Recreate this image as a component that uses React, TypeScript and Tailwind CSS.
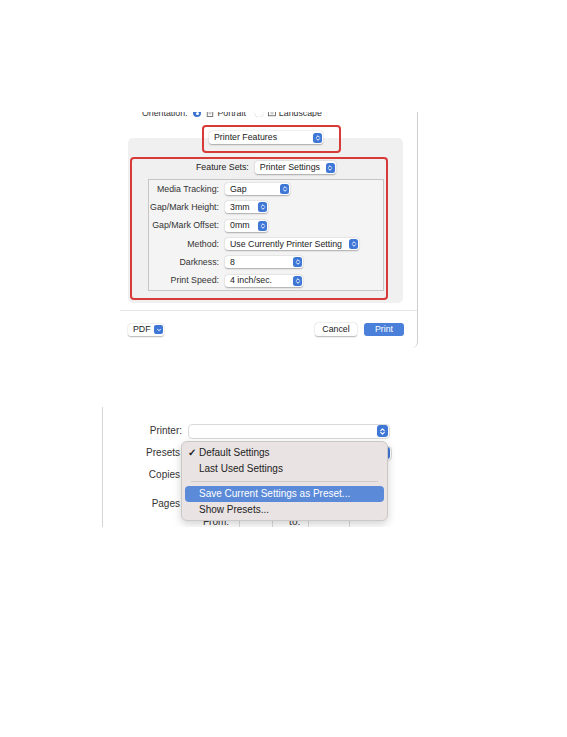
import React from 'react';

const RED = 'border-[#d83a3a]';

function Stepper({ size = 'small' }: { size?: 'small' | 'large' }) {
  const box = size === 'small' ? 'w-[9px] h-[10px] rounded-[2.5px]' : 'w-[11px] h-[12px] rounded-[3px]';
  return (
    <span className={`flex items-center justify-center bg-[#3f77d6] ${box}`}>
      <svg viewBox="0 0 8 10" className={size === 'small' ? 'w-[6px] h-[8px]' : 'w-[7px] h-[9px]'}>
        <path d="M2 4 L4 2 L6 4 M2 6 L4 8 L6 6" stroke="white" strokeWidth="1.3" fill="none" strokeLinecap="round" strokeLinejoin="round" />
      </svg>
    </span>
  );
}

function Popup({ value, width, height = 'h-[12px]' }: { value: string; width: string; height?: string }) {
  return (
    <div className={`flex items-center justify-between bg-white rounded-[3px] pl-[5px] pr-[1px] shadow-[0_0.5px_1.5px_rgba(0,0,0,0.3)] ${width} ${height}`}>
      <span>{value}</span>
      <Stepper />
    </div>
  );
}

const settings = [
  { label: 'Media Tracking:', value: 'Gap', width: 'w-[65px]' },
  { label: 'Gap/Mark Height:', value: '3mm', width: 'w-[43px]' },
  { label: 'Gap/Mark Offset:', value: '0mm', width: 'w-[43px]' },
  { label: 'Method:', value: 'Use Currently Printer Setting', width: 'w-[134px]' },
  { label: 'Darkness:', value: '8', width: 'w-[78px]' },
  { label: 'Print Speed:', value: '4 inch/sec.', width: 'w-[78px]' },
];

function PaperIcon({ landscape }: { landscape?: boolean }) {
  return (
    <svg viewBox="0 0 10 10" className="w-[8px] h-[8px] ml-[5px] mr-[3px]">
      {landscape ? (
        <rect x="0.5" y="2" width="9" height="6.5" fill="none" stroke="#444" strokeWidth="0.9" />
      ) : (
        <rect x="1.5" y="0.5" width="7" height="9" fill="none" stroke="#444" strokeWidth="0.9" />
      )}
      <path d="M3 4 H7 M3 6 H7" stroke="#666" strokeWidth="0.6" />
    </svg>
  );
}

function PrintDialogFeatures() {
  return (
    <div className="ml-[120px] mt-[112px] w-[298px] flex flex-col border-r border-[#cfcfcf] rounded-br-[6px] pb-[12px] text-[8.8px] leading-none text-[#222]">
      {/* orientation row, cropped at the top of the screenshot */}
      <div className="h-[5px] overflow-hidden">
        <div className="-mt-[6px] h-[14px] flex items-center pl-[22px] text-[#333]">
          <span>Orientation:</span>
          <span className="ml-[6px] w-[8px] h-[8px] rounded-full bg-[#3d74d0] flex items-center justify-center">
            <span className="w-[3px] h-[3px] rounded-full bg-white" />
          </span>
          <PaperIcon />
          <span>Portrait</span>
          <span className="ml-[9px] w-[8px] h-[8px] rounded-full bg-white shadow-[0_0_1px_rgba(0,0,0,0.4)]" />
          <PaperIcon landscape />
          <span>Landscape</span>
        </div>
      </div>

      <div className={`relative z-10 mt-[8px] ml-[82px] w-[139px] h-[28px] border-2 ${RED} rounded-[4px] pt-[4px] pl-[5px]`}>
        <Popup value="Printer Features" width="w-[114px]" height="h-[13px]" />
      </div>

      <div className="-mt-[15px] ml-[8px] w-[275px] bg-[#f0f0f0] rounded-[5px] pt-[19px] pl-[2px] pb-[3px]">
        <div className={`w-[258px] h-[143px] border-2 ${RED} rounded-[4px] flex flex-col`}>
          <div className="mt-[2px] h-[13px] flex items-center pl-[64px]">
            <span>Feature Sets:</span>
            <div className="ml-[6px]">
              <Popup value="Printer Settings" width="w-[81px]" height="h-[13px]" />
            </div>
          </div>
          <div className="mt-[5px] ml-[16px] w-[236px] h-[112px] border border-[#c6c6c6] bg-[#f4f4f4] flex flex-col">
            {settings.map((s) => (
              <div key={s.label} className="h-[18.4px] flex items-center">
                <span className="w-[70px] text-right text-[#333]">{s.label}</span>
                <div className="ml-[6px]">
                  <Popup value={s.value} width={s.width} />
                </div>
              </div>
            ))}
          </div>
        </div>
      </div>

      <div className="mt-[7px] h-px bg-[#e6e6e6]" />

      <div className="mt-[12px] h-[13px] flex items-center pl-[8px] pr-[13px]">
        <div className="w-[36px] h-[12px] flex items-center justify-between bg-white rounded-[3px] pl-[5px] pr-[1px] shadow-[0_0.5px_1.5px_rgba(0,0,0,0.3)]">
          <span>PDF</span>
          <span className="w-[9px] h-[9px] rounded-[2px] bg-[#3f77d6] flex items-center justify-center">
            <svg viewBox="0 0 8 8" className="w-[6px] h-[6px]">
              <path d="M2 3 L4 5 L6 3" stroke="white" strokeWidth="1.3" fill="none" strokeLinecap="round" strokeLinejoin="round" />
            </svg>
          </span>
        </div>
        <div className="flex-1" />
        <div className="w-[42px] h-[13px] flex items-center justify-center bg-white rounded-[3px] shadow-[0_0.5px_1.5px_rgba(0,0,0,0.3)]">
          Cancel
        </div>
        <div className="ml-[7px] w-[40px] h-[13px] flex items-center justify-center bg-[#4a80d9] text-white rounded-[3px]">
          Print
        </div>
      </div>
    </div>
  );
}

function PresetsMenu() {
  return (
    <div className="absolute left-[78px] top-[34px] w-[207px] h-[80px] rounded-[6px] bg-[#e9e3e3] border border-[#cdc8c8] shadow-[0_3px_8px_rgba(0,0,0,0.18)] pt-[3px] px-[3px] text-[10px] leading-none text-[#222]">
      <div className="h-[16px] flex items-center">
        <span className="w-[14px] pl-[3px] text-[10px] font-bold">✓</span>
        <span>Default Settings</span>
      </div>
      <div className="h-[16px] flex items-center pl-[14px]">Last Used Settings</div>
      <div className="h-[9px] pt-[4px] px-[6px]">
        <div className="h-px bg-[#cfc9c9]" />
      </div>
      <div className="h-[16px] flex items-center pl-[14px] bg-[#5b8ad8] text-white rounded-[4px]">
        Save Current Settings as Preset...
      </div>
      <div className="h-[16px] flex items-center pl-[14px]">Show Presets...</div>
    </div>
  );
}

function PrintDialogPresets() {
  return (
    <div className="relative ml-[102px] mt-[59px] w-[300px] h-[120px] border-l border-[#d6d6d6] overflow-hidden text-[10px] leading-none text-[#333]">
      <div className="mt-[16px] h-[16px] flex items-center">
        <span className="w-[79px] text-right">Printer:</span>
        <div className="ml-[6px] w-[202px] h-[15px] flex items-center justify-end pr-[1px] bg-white border border-[#dadada] rounded-[4px]">
          <Stepper size="large" />
        </div>
      </div>
      <div className="mt-[6px] h-[16px] flex items-center">
        <span className="w-[77px] text-right">Presets</span>
        <div className="ml-[8px] w-[204px] h-[15px] flex items-center justify-end pr-[1px] bg-white border border-[#dadada] rounded-[4px]">
          <Stepper size="large" />
        </div>
      </div>
      <div className="mt-[6px] h-[16px] flex items-center">
        <span className="w-[77px] text-right">Copies</span>
      </div>
      <div className="mt-[13px] h-[16px] flex items-center">
        <span className="w-[77px] text-right">Pages</span>
      </div>
      <div className="mt-[2px] h-[16px] flex items-center pl-[100px]">
        <span>From:</span>
        <span className="ml-[10px] w-[34px] h-[13px] bg-white border border-[#dadada]" />
        <span className="ml-[16px]">to:</span>
        <span className="ml-[8px] w-[42px] h-[13px] bg-white border border-[#dadada]" />
      </div>
      <PresetsMenu />
    </div>
  );
}

export default function App() {
  return (
    <div className="w-[567px] h-[737px] bg-white overflow-hidden flex flex-col font-['Liberation_Sans',Arial,sans-serif]">
      <PrintDialogFeatures />
      <PrintDialogPresets />
    </div>
  );
}
